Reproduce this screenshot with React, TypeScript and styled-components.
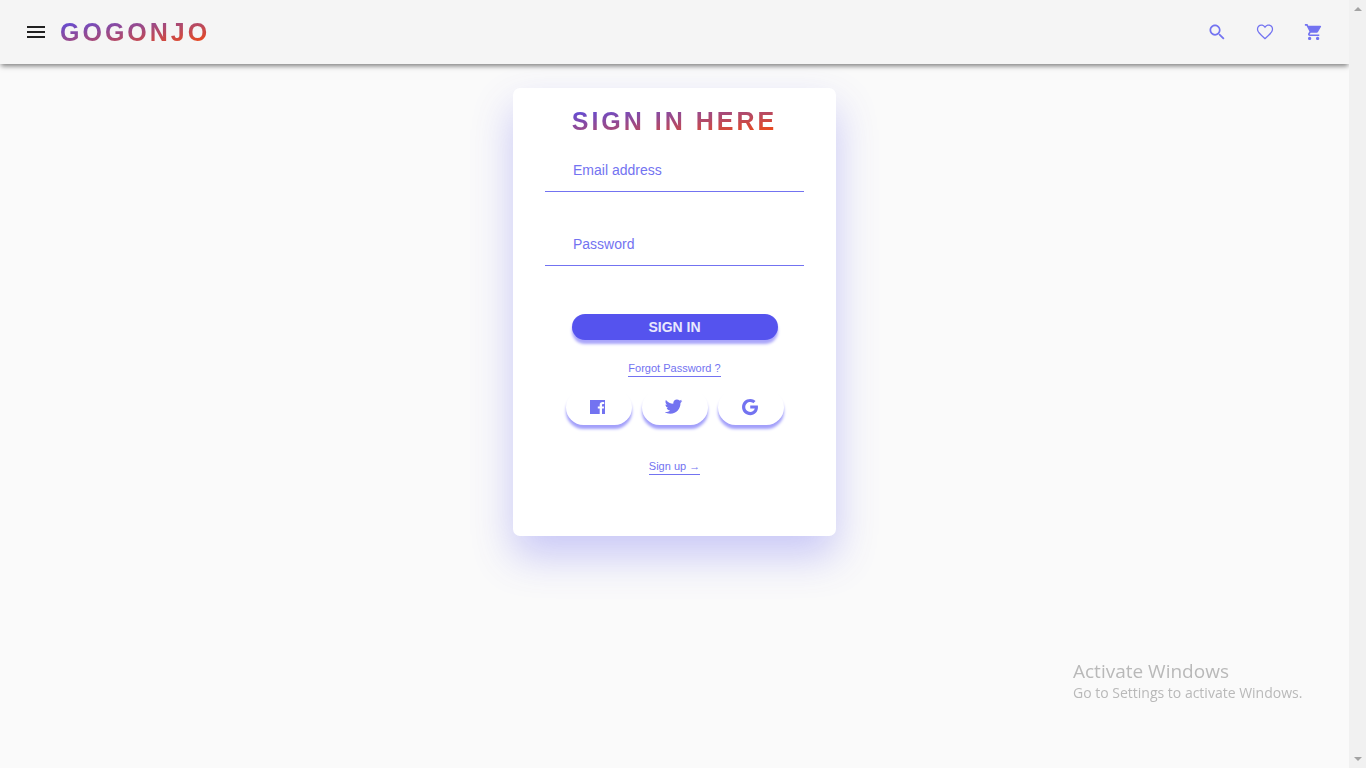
import React from "react";
import styled, { createGlobalStyle } from "styled-components";
import {
  IoLogoGoogle,
  IoLogoTwitter,
  IoMdCart,
  IoMdHeartEmpty,
  IoMdMenu,
  IoMdSearch,
} from "react-icons/io";

const accent = "#7373f1";

const GlobalStyle = createGlobalStyle`
  *, *::before, *::after { box-sizing: border-box; }
  body {
    margin: 0;
    background: #fafafa;
    font-family: "Liberation Sans", Arial, sans-serif;
  }
`;

const Shell = styled.div`
  display: flex;
  height: 100vh;
`;

const Page = styled.div`
  flex: 1;
  min-width: 0;
  overflow: hidden;
`;

const Header = styled.header`
  display: flex;
  align-items: center;
  justify-content: space-between;
  height: 64px;
  padding: 0 24px;
  background: #f5f5f5;
  box-shadow: 0 3px 5px -1px rgba(0, 0, 0, 0.5);
`;

const Brand = styled.div`
  display: flex;
  align-items: center;
  gap: 12px;
`;

const Actions = styled.nav`
  display: flex;
  gap: 24px;
  padding-bottom: 1px;
`;

const IconButton = styled.button<{ $dark?: boolean }>`
  display: flex;
  align-items: center;
  justify-content: center;
  width: 24px;
  height: 24px;
  padding: 0;
  border: 0;
  background: none;
  color: ${(p) => (p.$dark ? "#212121" : accent)};
  cursor: pointer;
`;

const Title = styled.h1`
  width: fit-content;
  margin: 0;
  font-size: 25px;
  line-height: 32px;
  font-weight: 700;
  letter-spacing: 3px;
  color: transparent;
  background: linear-gradient(to bottom right, #4f4cf0, #ff4800);
  background-clip: text;
  -webkit-background-clip: text;
`;

const Main = styled.main`
  display: flex;
  justify-content: center;
  padding: 24px;
`;

const Card = styled.form`
  display: flex;
  flex-direction: column;
  align-items: center;
  width: 100%;
  max-width: 323px;
  padding: 17px 32px 61px;
  border-radius: 7px;
  background: #fff;
  box-shadow: 0 20px 40px rgba(87, 83, 238, 0.3);
`;

const Field = styled.input`
  width: 100%;
  height: 42px;
  margin: 13px 0 19px;
  padding: 0 28px 2px;
  border: 0;
  border-bottom: 1px solid ${accent};
  background: none;
  font: 14px "Liberation Sans", Arial, sans-serif;
  color: ${accent};
  outline: 0;

  &::placeholder {
    color: ${accent};
    opacity: 1;
  }
`;

const SubmitButton = styled.button`
  width: 206px;
  height: 26px;
  margin: 29px 0 20px;
  padding: 0;
  border: 0;
  border-radius: 13px;
  background: #5553ee;
  box-shadow: 0 4px 3px #aaa6fa;
  font: 700 14px "Liberation Sans", Arial, sans-serif;
  color: #e9e8fd;
  cursor: pointer;
`;

const TextLink = styled.a`
  border-bottom: 1px solid ${accent};
  font-size: 11px;
  line-height: 16px;
  color: ${accent};
  text-decoration: none;
`;

const SocialRow = styled.div`
  display: flex;
  gap: 10px;
  margin: 13px 0 33px;
`;

const SocialButton = styled.button`
  display: flex;
  align-items: center;
  justify-content: center;
  width: 66px;
  height: 35px;
  padding: 0 2px 2px 0;
  border: 0;
  border-radius: 20px;
  background: #fff;
  box-shadow: 0 4px 3px #a29ffa;
  clip-path: inset(4px -8px -12px);
  color: ${accent};
  cursor: pointer;
`;

const Notice = styled.aside`
  position: fixed;
  right: 57px;
  bottom: 65px;
  width: 236px;
  font-family: "Open Sans", "Noto Sans", sans-serif;
  color: #b9b9b9;
`;

const NoticeTitle = styled.p`
  margin: 0;
  font-size: 19px;
  line-height: 24px;
`;

const NoticeText = styled.p`
  margin: 0;
  font-size: 14px;
  line-height: 20px;
`;

const ScrollTrack = styled.div`
  display: flex;
  flex-direction: column;
  justify-content: space-between;
  align-items: center;
  width: 17px;
  padding: 7px 0;
  background: #f1f1f1;
`;

const Arrow = styled.span<{ $down?: boolean }>`
  border: 4px solid transparent;
  border-top: ${(p) => (p.$down ? "4px solid #a3a3a3" : "0")};
  border-bottom: ${(p) => (p.$down ? "0" : "4px solid #a3a3a3")};
`;

function FacebookIcon() {
  return (
    <svg width="15" height="14" viewBox="0 0 15 14" fill="currentColor" aria-hidden="true">
      <path d="M0 0H15V14H12V8.6H13.8L14.1 6.5H12V5.2C12 4.5 12.3 4.1 13.1 4.1H14.2V2.2C13.8 2.1 13.2 2.1 12.6 2.1C10.8 2.1 9.7 3.1 9.7 4.9V6.5H7.8V8.6H9.7V14H0Z" />
    </svg>
  );
}

export default function App() {
  return (
    <>
      <GlobalStyle />
      <Shell>
        <Page>
          <Header>
            <Brand>
              <IconButton $dark aria-label="Menu">
                <IoMdMenu size={24} />
              </IconButton>
              <Title>GOGONJO</Title>
            </Brand>
            <Actions>
              <IconButton aria-label="Search">
                <IoMdSearch size={20} />
              </IconButton>
              <IconButton aria-label="Favourites">
                <IoMdHeartEmpty size={20} />
              </IconButton>
              <IconButton aria-label="Cart">
                <IoMdCart size={20} />
              </IconButton>
            </Actions>
          </Header>
          <Main>
            <Card onSubmit={(e) => e.preventDefault()}>
              <Title as="h2">SIGN IN HERE</Title>
              <Field type="email" placeholder="Email address" aria-label="Email address" />
              <Field type="password" placeholder="Password" aria-label="Password" />
              <SubmitButton type="submit">SIGN IN</SubmitButton>
              <TextLink href="#forgot">Forgot Password ?</TextLink>
              <SocialRow>
                <SocialButton type="button" aria-label="Facebook">
                  <FacebookIcon />
                </SocialButton>
                <SocialButton type="button" aria-label="Twitter">
                  <IoLogoTwitter size={19} />
                </SocialButton>
                <SocialButton type="button" aria-label="Google">
                  <IoLogoGoogle size={20} />
                </SocialButton>
              </SocialRow>
              <TextLink href="#signup">Sign up →</TextLink>
            </Card>
          </Main>
        </Page>
        <ScrollTrack>
          <Arrow />
          <Arrow $down />
        </ScrollTrack>
      </Shell>
      <Notice>
        <NoticeTitle>Activate Windows</NoticeTitle>
        <NoticeText>Go to Settings to activate Windows.</NoticeText>
      </Notice>
    </>
  );
}
